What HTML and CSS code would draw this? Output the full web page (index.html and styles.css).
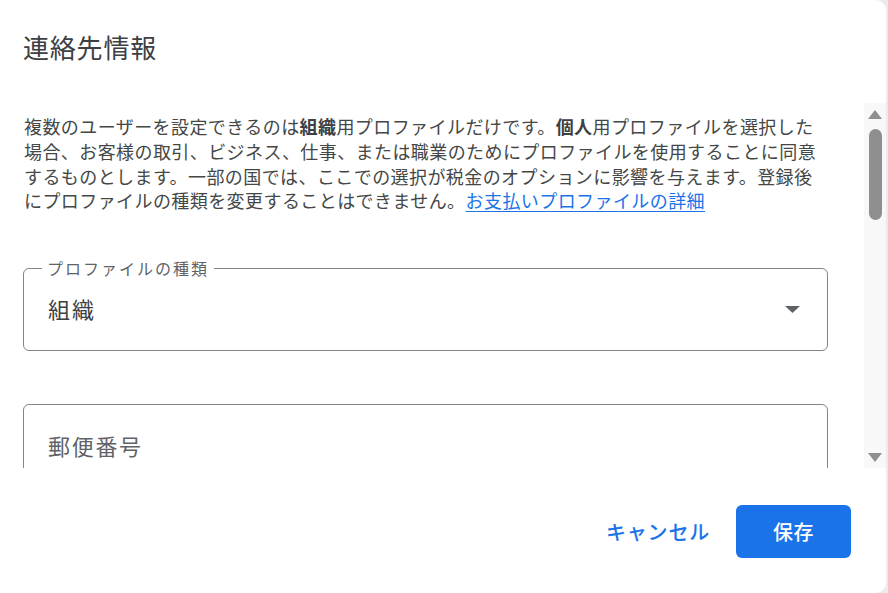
FILE: index.html
```html
<!DOCTYPE html>
<html lang="ja">
<head>
<meta charset="utf-8">
<title>連絡先情報</title>
<link rel="stylesheet" href="styles.css">
</head>
<body>
<div class="dialog">
  <div class="dialog-header">
    <h1 class="dialog-title">連絡先情報</h1>
  </div>
  <div class="dialog-body">
    <div class="scroll-content">
      <p class="intro">複数のユーザーを設定できるのは<b>組織</b>用プロファイルだけです。<b>個人</b>用プロファイルを選択した場合、お客様の取引、ビジネス、仕事、または職業のためにプロファイルを使用することに同意するものとします。一部の国では、ここでの選択が税金のオプションに影響を与えます。登録後にプロファイルの種類を変更することはできません。<a class="link" href="#">お支払いプロファイルの詳細</a></p>
      <div class="field select-field">
        <span class="field-label">プロファイルの種類</span>
        <span class="field-value">組織</span>
        <svg class="select-arrow" width="15" height="7" viewBox="0 0 15 7"><path d="M0 0h15L7.5 7z" fill="#5f6368"/></svg>
      </div>
      <div class="field text-field">
        <span class="field-placeholder">郵便番号</span>
      </div>
    </div>
    <div class="scrollbar">
      <svg class="sb-arrow" width="14" height="9" viewBox="0 0 14 9"><path d="M7 0L14 9H0z" fill="#8f8f8f"/></svg>
      <div class="sb-thumb-area"><div class="sb-thumb"></div></div>
      <svg class="sb-arrow" width="14" height="9" viewBox="0 0 14 9"><path d="M0 0h14L7 9z" fill="#8f8f8f"/></svg>
    </div>
  </div>
  <div class="dialog-footer">
    <button class="btn btn-text">キャンセル</button>
    <button class="btn btn-primary">保存</button>
  </div>
</div>
</body>
</html>
```
FILE: styles.css
```css
html, body {
  margin: 0;
  padding: 0;
}
body {
  background: #ebebeb;
  font-family: "Noto Sans CJK JP", "Noto Sans", sans-serif;
  color: #3c4043;
  width: 888px;
  height: 593px;
  overflow: hidden;
}
.dialog {
  width: 886px;
  height: 593px;
  background: #fff;
  border-radius: 0 10px 10px 0;
  display: flex;
  flex-direction: column;
  overflow: hidden;
}
.dialog-header {
  height: 103px;
  box-sizing: border-box;
  padding: 30px 0 0 23px;
  flex: none;
}
.dialog-title {
  margin: 0;
  font-size: 26px;
  line-height: 34px;
  font-weight: 400;
  letter-spacing: 0.8px;
  color: #3c4043;
}
.dialog-body {
  height: 365px;
  flex: none;
  display: flex;
}
.scroll-content {
  width: 864px;
  box-sizing: border-box;
  padding: 11px 36px 0 23px;
  overflow: hidden;
}
.intro {
  margin: 0 0 55px;
  max-width: 800px;
  font-size: 18px;
  line-height: 24.75px;
  letter-spacing: 0.42px;
  color: #444746;
  padding-left: 1px;
}
.intro b {
  font-weight: 700;
  color: #3c4043;
}
.link {
  color: #1a73e8;
  text-decoration: underline;
  text-underline-offset: 3px;
}
.field {
  position: relative;
  height: 83px;
  box-sizing: border-box;
  border: 1px solid #80868b;
  border-radius: 6px;
  display: flex;
  align-items: center;
  padding: 0 27px 0 24px;
}
.text-field {
  margin-top: 53px;
}
.field-label {
  position: absolute;
  left: 18px;
  top: -12px;
  padding: 0 5px;
  background: #fff;
  font-size: 16px;
  line-height: 22px;
  letter-spacing: 2px;
  color: #5f6368;
}
.field-value {
  flex: 1;
  font-size: 22px;
  line-height: 30px;
  letter-spacing: 2px;
  color: #3c4043;
  margin-top: -3px;
}
.field-placeholder {
  font-size: 22px;
  line-height: 30px;
  letter-spacing: 1.7px;
  color: #5f6368;
  margin-top: -1px;
}
.select-arrow {
  flex: none;
  display: block;
}
.scrollbar {
  width: 22px;
  background: #f8f8f8;
  display: flex;
  flex-direction: column;
  align-items: center;
  padding: 7px 0 6px;
  box-sizing: border-box;
}
.sb-arrow {
  display: block;
  flex: none;
}
.sb-thumb-area {
  flex: 1;
  width: 13px;
  padding-top: 10px;
}
.sb-thumb {
  width: 13px;
  height: 91px;
  border-radius: 6.5px;
  background: #8f8f8f;
}
.dialog-footer {
  flex: 1;
  display: flex;
  justify-content: flex-end;
  align-items: center;
  padding: 2px 35px 0 0;
}
.btn {
  font-family: "Noto Sans CJK JP", "Noto Sans", sans-serif;
  font-size: 20px;
  font-weight: 500;
  border: none;
  cursor: pointer;
  height: 53px;
  border-radius: 6px;
}
.btn-text {
  background: transparent;
  color: #1a73e8;
  padding: 0 16px;
  letter-spacing: 0.8px;
  margin-right: 10px;
}
.btn-primary {
  background: #1a73e8;
  color: #fff;
  width: 115px;
  letter-spacing: 0.5px;
}
```
